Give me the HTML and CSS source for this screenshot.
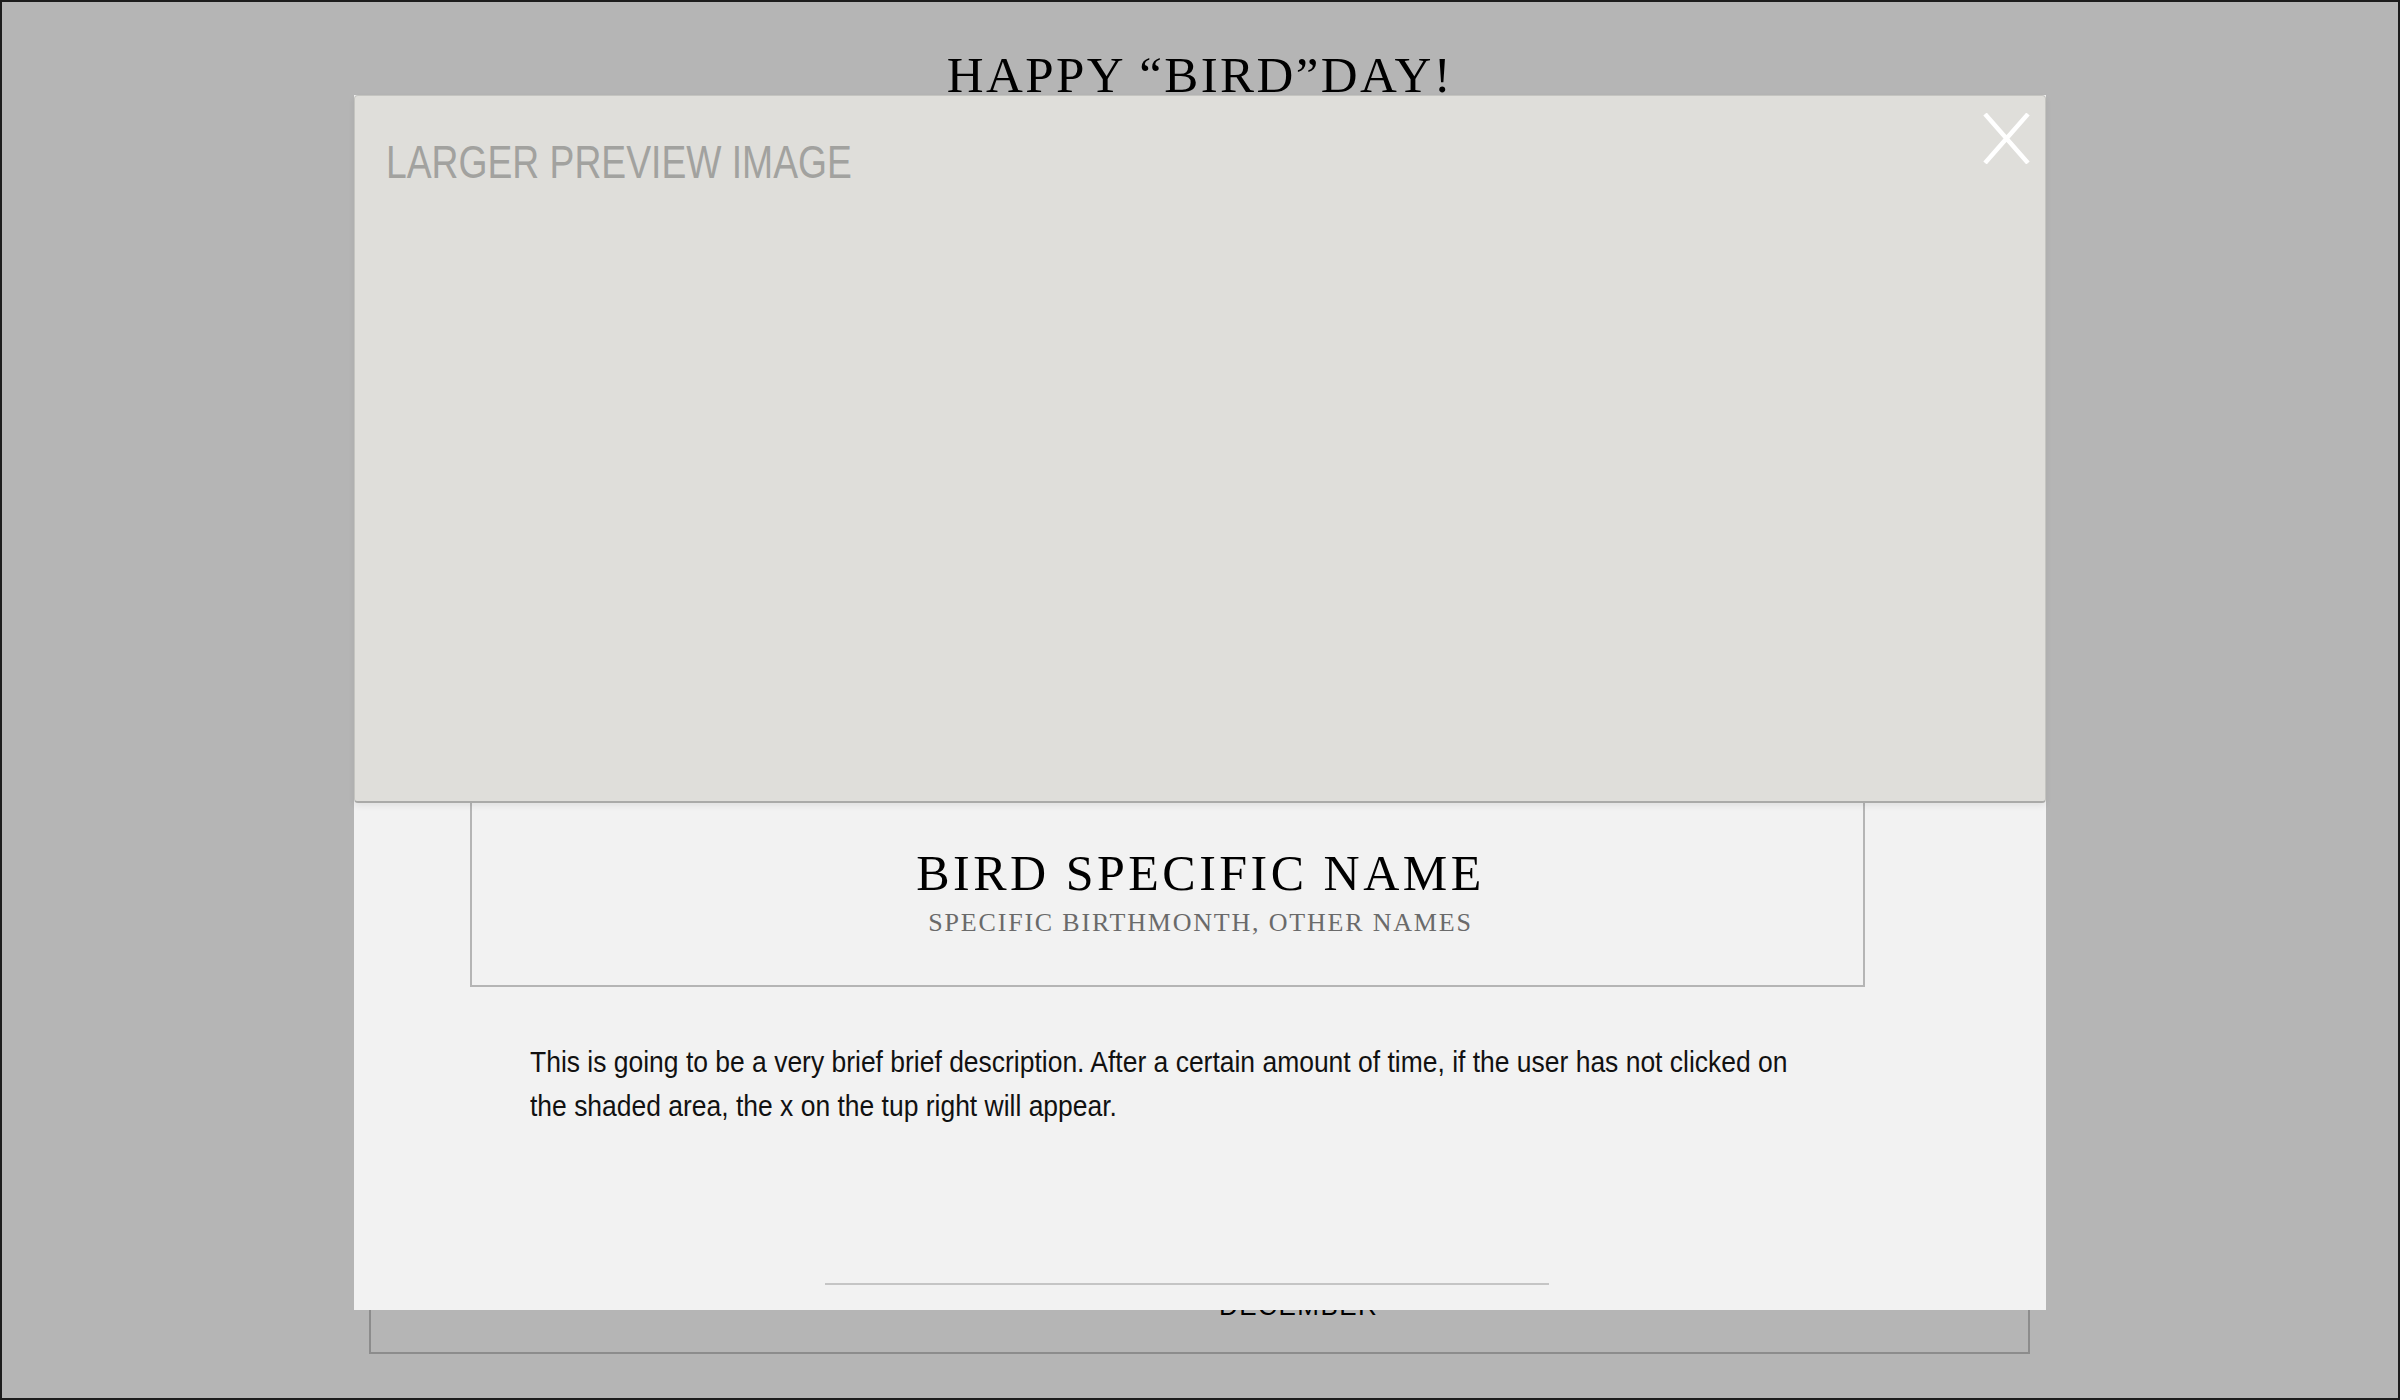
FILE: index.html
```html
<!DOCTYPE html>
<html lang="en">
<head>
<meta charset="utf-8">
<title>Happy Birdday</title>
<link rel="stylesheet" href="styles.css">
</head>
<body>
<div class="page">
  <h1 class="site-title">HAPPY “BIRD”DAY!</h1>
  <section class="month-card">
    <div class="month-label">DECEMBER</div>
  </section>

  <div class="modal">
    <div class="preview">
      <span class="preview-label">LARGER PREVIEW IMAGE</span>
      <button class="close" aria-label="Close">
        <svg width="47" height="51" viewBox="0 0 47 51"><path d="M2 1 L45 50 M45 1 L2 50" stroke="#fff" stroke-width="4.5" fill="none"/></svg>
      </button>
    </div>
    <div class="bird-header">
      <h2 class="bird-name">BIRD SPECIFIC NAME</h2>
      <p class="bird-meta">SPECIFIC BIRTHMONTH, OTHER NAMES</p>
    </div>
    <p class="desc">This is going to be a very brief brief description. After a certain amount of time, if the user has not clicked on the shaded area, the x on the tup right will appear.</p>
    <hr class="rule">
  </div>
</div>
</body>
</html>
```
FILE: styles.css
```css
html, body {
  margin: 0;
  padding: 0;
}

body {
  width: 2400px;
  height: 1400px;
  overflow: hidden;
}

.page {
  position: relative;
  box-sizing: border-box;
  width: 2400px;
  height: 1400px;
  border: 2px solid #1c1c1c;
  background: #b5b5b5;
  display: flex;
  flex-direction: column;
}

.site-title {
  margin: 48px 0 0;
  font-family: "Liberation Serif", serif;
  font-weight: normal;
  font-size: 51px;
  line-height: 51px;
  letter-spacing: 2.4px;
  text-align: center;
  color: #000;
}

.month-card {
  box-sizing: border-box;
  margin: 40px 0 0 367px;
  width: 1661px;
  height: 1213px;
  border: 2px solid #8c8c8c;
  display: flex;
  flex-direction: column;
  justify-content: flex-end;
  padding: 0 0 33px 848px;
}

.month-label {
  font-family: "Liberation Sans", sans-serif;
  font-size: 26px;
  line-height: 26px;
  letter-spacing: 1.5px;
  color: #000;
}

.modal {
  position: absolute;
  left: 352px;
  top: 93px;
  width: 1692px;
  height: 1215px;
  background: #f2f2f2;
  display: flex;
  flex-direction: column;
}

.preview {
  position: relative;
  box-sizing: border-box;
  height: 708px;
  background: #dfdeda;
  border: 1px solid #c4c4c0;
  border-bottom: 2px solid #aaaaa8;
  border-radius: 4px;
  box-shadow: 0 3px 6px rgba(0, 0, 0, 0.07);
  z-index: 1;
}

.preview-label {
  position: absolute;
  left: 31px;
  top: 43px;
  font-family: "Liberation Sans", sans-serif;
  font-size: 46px;
  line-height: 46px;
  color: #a2a29f;
  white-space: nowrap;
  transform: scaleX(0.81);
  transform-origin: 0 0;
}

.close {
  position: absolute;
  top: 17px;
  right: 15px;
  padding: 0;
  border: 0;
  background: none;
  width: 47px;
  height: 51px;
  cursor: pointer;
}

.close svg {
  display: block;
}

.bird-header {
  box-sizing: border-box;
  margin-left: 116px;
  width: 1395px;
  height: 184px;
  border: 2px solid #b5b5b5;
  border-top: 0;
  padding: 45px 0 0 66px;
  text-align: center;
}

.bird-name {
  margin: 0;
  font-family: "Liberation Serif", serif;
  font-weight: normal;
  font-size: 50px;
  line-height: 50px;
  letter-spacing: 3.5px;
  color: #000;
}

.bird-meta {
  margin: 12px 0 0;
  font-family: "Liberation Serif", serif;
  font-size: 26px;
  line-height: 26px;
  letter-spacing: 1.8px;
  color: #6a6a6a;
}

.desc {
  margin: 53px 0 0 176px;
  width: 1463px;
  font-family: "Liberation Sans", sans-serif;
  font-size: 30px;
  line-height: 44px;
  color: #111;
  transform: scaleX(0.882);
  transform-origin: 0 0;
}

.rule {
  margin: auto 0 25px 471px;
  width: 724px;
  height: 2px;
  border: 0;
  background: #c5c5c5;
}
```
